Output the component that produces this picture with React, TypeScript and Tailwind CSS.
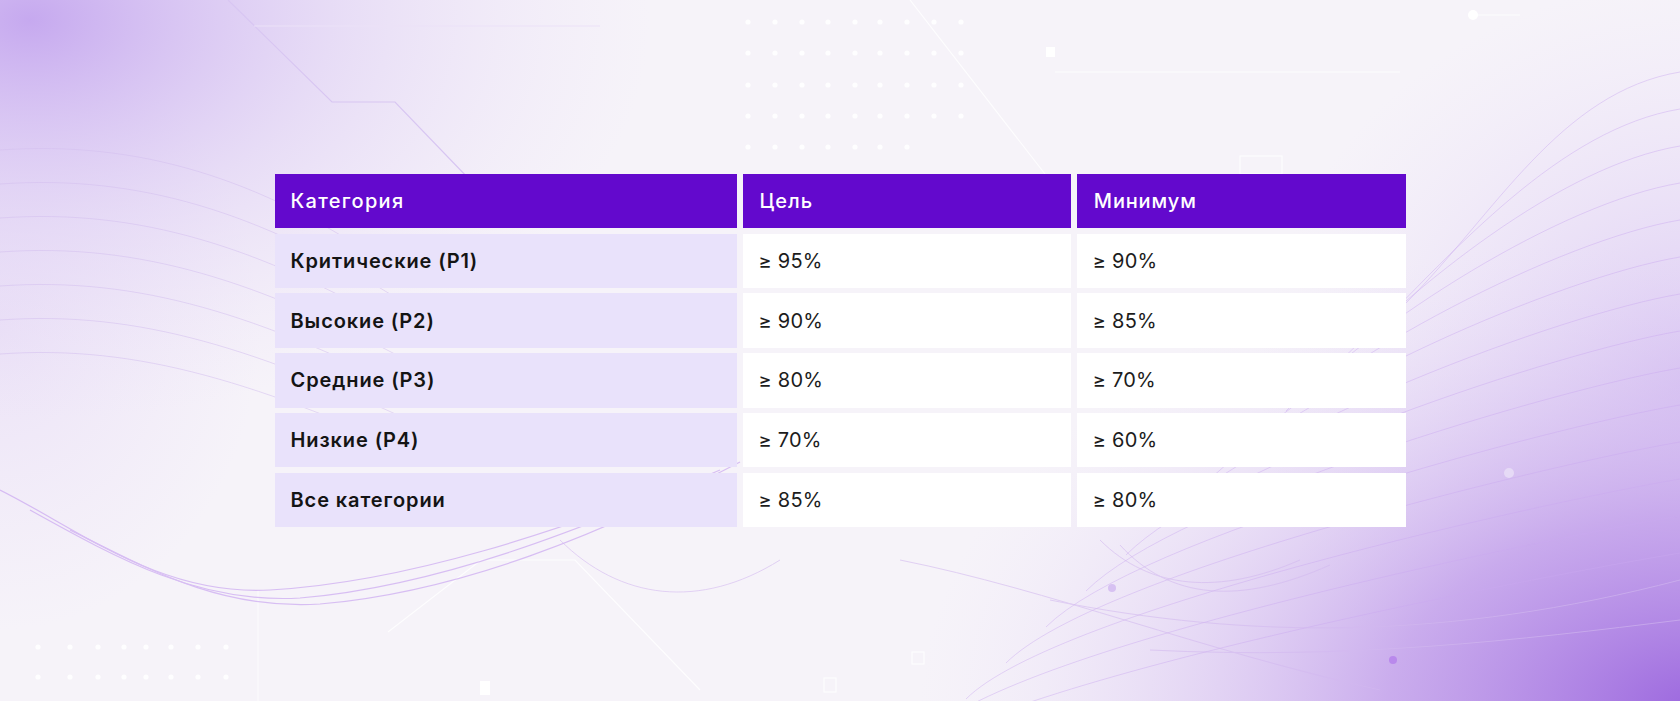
import React from "react";

const rows = [
  { cat: "Критические (P1)", goal: "≥ 95%", min: "≥ 90%" },
  { cat: "Высокие (P2)", goal: "≥ 90%", min: "≥ 85%" },
  { cat: "Средние (P3)", goal: "≥ 80%", min: "≥ 70%" },
  { cat: "Низкие (P4)", goal: "≥ 70%", min: "≥ 60%" },
  { cat: "Все категории", goal: "≥ 85%", min: "≥ 80%" },
];

function Background() {
  const dotsTop: React.ReactNode[] = [];
  const xs = [748, 775, 802, 828, 855, 880, 907, 934, 961];
  const ys = [22, 53, 85, 116, 147];
  ys.forEach((y, yi) =>
    xs.forEach((x, xi) => {
      if (yi === 4 && xi > 6) return;
      dotsTop.push(<circle key={`t${x}-${y}`} cx={x} cy={y} r={2.6} fill="#ffffff" opacity={0.9} />);
    })
  );
  const dotsBot: React.ReactNode[] = [];
  [38, 70, 98, 124, 146, 171, 198, 226].forEach((x) => {
    dotsBot.push(<circle key={`b1${x}`} cx={x} cy={647} r={2.6} fill="#ffffff" opacity={0.9} />);
    dotsBot.push(<circle key={`b2${x}`} cx={x} cy={677} r={2.6} fill="#ffffff" opacity={0.9} />);
  });

  const fan: React.ReactNode[] = [];
  for (let i = 0; i < 14; i++) {
    const y0 = 243 + i * 36;
    const y1 = 72 + i * 37;
    const x0 = 1406 - i * 40;
    fan.push(
      <path
        key={`f${i}`}
        d={`M${x0} ${y0 + 60} C ${x0 + 90} ${y0 - 30}, ${1560} ${y1 + 20}, 1680 ${y1}`}
        stroke="#c9a9f0"
        strokeWidth="1"
        fill="none"
        opacity={0.45}
      />
    );
  }
  const left: React.ReactNode[] = [];
  for (let i = 0; i < 7; i++) {
    const y = 150 + i * 34;
    left.push(
      <path
        key={`l${i}`}
        d={`M0 ${y} C 140 ${y - 10}, 260 ${y + 30}, ${380 + i * 10} ${y + 110}`}
        stroke="#d3c0ef"
        strokeWidth="1"
        fill="none"
        opacity={0.55}
      />
    );
  }
  return (
    <svg className="absolute inset-0" width="1680" height="701" viewBox="0 0 1680 701">
      <defs>
        <radialGradient id="tl" cx="0" cy="0" r="1" gradientUnits="userSpaceOnUse" gradientTransform="translate(30 20) scale(620 400)">
          <stop offset="0" stopColor="#c6a9ef" stopOpacity="1" />
          <stop offset="0.5" stopColor="#dccbf4" stopOpacity="0.55" />
          <stop offset="1" stopColor="#eadff8" stopOpacity="0" />
        </radialGradient>
        <radialGradient id="br" cx="0" cy="0" r="1" gradientUnits="userSpaceOnUse" gradientTransform="translate(1700 710) scale(780 480)">
          <stop offset="0" stopColor="#9b66de" stopOpacity="1" />
          <stop offset="0.4" stopColor="#bf9bea" stopOpacity="0.8" />
          <stop offset="1" stopColor="#eadff8" stopOpacity="0" />
        </radialGradient>
        <radialGradient id="rm" cx="0" cy="0" r="1" gradientUnits="userSpaceOnUse" gradientTransform="translate(1700 380) scale(440 400)">
          <stop offset="0" stopColor="#d6c1f2" stopOpacity="0.9" />
          <stop offset="1" stopColor="#eadff8" stopOpacity="0" />
        </radialGradient>
        <radialGradient id="lm" cx="0" cy="0" r="1" gradientUnits="userSpaceOnUse" gradientTransform="translate(0 330) scale(260 300)">
          <stop offset="0" stopColor="#e7dbf6" stopOpacity="0.7" />
          <stop offset="1" stopColor="#eadff8" stopOpacity="0" />
        </radialGradient>
      </defs>
      <rect width="1680" height="701" fill="#f6f3f9" />
      <rect width="1680" height="701" fill="url(#lm)" />
      <rect width="1680" height="701" fill="url(#rm)" />
      <rect width="1680" height="701" fill="url(#tl)" />
      <rect width="1680" height="701" fill="url(#br)" />

      <g fill="none" strokeWidth="1.2">
        <path d="M228 0 L332 102 L395 102 L470 180" stroke="#d8c6f2" />
        <path d="M254 26 L600 26" stroke="#ece2f8" />
        <path d="M910 0 L1045 174" stroke="#ffffff" opacity="0.8" />
        <path d="M1055 72 L1400 72" stroke="#ffffff" opacity="0.8" />
        <rect x="1240" y="156" width="42" height="18" stroke="#ffffff" opacity="0.8" />
        <rect x="1046" y="47" width="9" height="10" fill="#ffffff" stroke="none" />
        <path d="M1476 15 L1520 15" stroke="#ffffff" opacity="0.8" />
        <circle cx="1473" cy="15" r="5" fill="#ffffff" stroke="none" />
        <path d="M388 632 L481 560 L575 560 L700 690" stroke="#ffffff" opacity="0.8" />
        <path d="M258 590 L258 701" stroke="#ffffff" opacity="0.6" />
        <rect x="480" y="681" width="10" height="14" fill="#ffffff" stroke="none" />
        <rect x="912" y="652" width="12" height="12" stroke="#ffffff" opacity="0.8" />
        <rect x="824" y="678" width="12" height="14" stroke="#ffffff" opacity="0.8" />
      </g>
      {dotsTop}
      {dotsBot}
      {left}
      {fan}

      <g fill="none" stroke="#c49bf0" strokeWidth="1.2" opacity="0.6">
        <path d="M0 490 C 80 530, 160 596, 270 590 C 410 582, 560 530, 690 480" />
        <path d="M30 510 C 120 560, 200 604, 300 598 C 440 586, 580 530, 720 470" />
        <path d="M70 530 C 150 570, 220 610, 320 604 C 460 592, 600 535, 740 462" />
      </g>
      <g fill="none" stroke="#d3b9f0" strokeWidth="1" opacity="0.6">
        <path d="M560 540 C 620 600, 700 610, 780 560" />
        <path d="M1100 540 C 1150 590, 1220 595, 1300 560" />
        <path d="M1120 545 C 1170 600, 1240 605, 1330 565" />
        <path d="M900 560 C 1050 590, 1200 650, 1380 690" />
        <path d="M1050 600 C 1250 640, 1450 640, 1680 580" />
        <path d="M1150 650 C 1350 660, 1520 640, 1680 620" />
      </g>
      <circle cx="1393" cy="660" r="4" fill="#b989ec" />
      <circle cx="1112" cy="588" r="4" fill="#d7c1f2" />
      <circle cx="1509" cy="473" r="5" fill="#e6daf6" />
    </svg>
  );
}

export default function App() {
  const font = { fontFamily: "Inter, 'Noto Sans', sans-serif" };
  return (
    <div className="relative w-[1680px] h-[701px] overflow-hidden" style={font}>
      <Background />
      <div className="relative flex h-full items-center justify-center">
        <div className="grid w-[1131px] grid-cols-[463fr_329fr_329fr] gap-x-[5.6px] gap-y-[5.5px] text-[20px] leading-none">
          <div className="flex h-[54.3px] items-center bg-[#6309cd] pl-4 font-medium tracking-[1.3px] text-white">Категория</div>
          <div className="flex h-[54.3px] items-center bg-[#6309cd] pl-[17px] font-medium tracking-[1px] text-white">Цель</div>
          <div className="flex h-[54.3px] items-center bg-[#6309cd] pl-[17px] font-medium tracking-[0.8px] text-white">Минимум</div>
          {rows.map((r) => (
            <React.Fragment key={r.cat}>
              <div className="flex h-[54.3px] items-center bg-[#e9e2fb] pl-4 font-semibold tracking-[0.9px] text-[#141414]">{r.cat}</div>
              <div className="flex h-[54.3px] items-center bg-white pl-4 tracking-[0.2px] text-[#1c1c1c]">{r.goal}</div>
              <div className="flex h-[54.3px] items-center bg-white pl-4 tracking-[0.2px] text-[#1c1c1c]">{r.min}</div>
            </React.Fragment>
          ))}
        </div>
      </div>
    </div>
  );
}
